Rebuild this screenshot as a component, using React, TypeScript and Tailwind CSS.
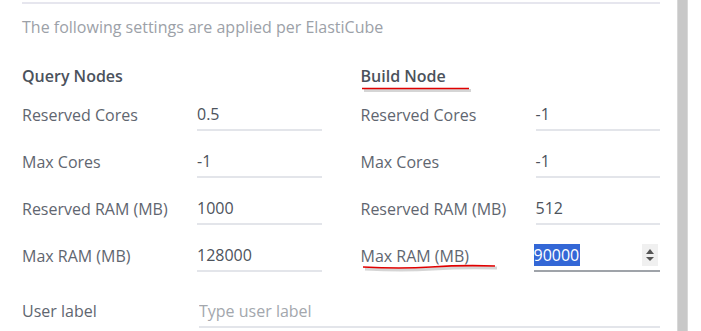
import React from 'react';

const font = { fontFamily: '"Open Sans", "Liberation Sans", sans-serif' };

type Field = { label: string; value: string };

const queryFields: Field[] = [
  { label: 'Reserved Cores', value: '0.5' },
  { label: 'Max Cores', value: '-1' },
  { label: 'Reserved RAM (MB)', value: '1000' },
  { label: 'Max RAM (MB)', value: '128000' },
];

const buildFields: Field[] = [
  { label: 'Reserved Cores', value: '-1' },
  { label: 'Max Cores', value: '-1' },
  { label: 'Reserved RAM (MB)', value: '512' },
];

const Row: React.FC<{ field: Field }> = ({ field }) => (
  <div className="flex items-center h-[47px]">
    <span className="w-[175px] shrink-0 text-[16px] text-[#5f6670]">{field.label}</span>
    <div className="flex-1 h-[32px] flex items-center border-b-2 border-[#e3e5ea] text-[16px] text-[#4d535c]">
      {field.value}
    </div>
  </div>
);

const FocusedRow: React.FC = () => (
  <div className="relative flex items-center h-[47px]">
    <span className="w-[173px] shrink-0 text-[16px] text-[#5f6670]">Max RAM (MB)</span>
    <div className="flex-1 h-[32px] flex items-center justify-between border-b-2 border-[#9fa3a9] mt-[1px] text-[16px]">
      <span className="bg-[#3367d6] text-white h-[22px] leading-[22px] pr-[1px]">90000</span>
      <div className="w-[16px] h-[22px] mr-[2px] bg-[#f0f0f0] flex flex-col items-center justify-center gap-[3px]">
        <div className="w-0 h-0 border-l-[4px] border-r-[4px] border-b-[5px] border-l-transparent border-r-transparent border-b-[#555]" />
        <div className="w-0 h-0 border-l-[4px] border-r-[4px] border-t-[4px] border-l-transparent border-r-transparent border-t-[#555]" />
      </div>
    </div>
    {/* hand-drawn annotation */}
    <svg className="absolute left-0 top-[31px]" width="140" height="10">
      <path d="M2 4 Q40 6 70 4 T134 3" stroke="#888" strokeOpacity="0.35" strokeWidth="3" fill="none" transform="translate(2,2)" />
      <path d="M2 4 Q40 6 70 4 T134 3" stroke="#e00000" strokeWidth="1.6" fill="none" />
    </svg>
  </div>
);

export default function App() {
  return (
    <div className="w-[701px] h-[331px] overflow-hidden bg-white flex" style={font}>
      <div className="w-[677px] shrink-0 pl-[22px] pr-[17px]">
        <div className="mt-[2px] h-[2px] bg-[#e6e6ee]" />
        <p className="mt-[12px] text-[16px] leading-[22px] text-[#9ca1a8]">
          The following settings are applied per ElastiCube
        </p>
        <div className="mt-[27px] grid grid-cols-2 gap-x-[39px]">
          <div>
            <h3 className="text-[16px] leading-[22px] font-semibold text-[#4b525c] mb-[4px]">Query Nodes</h3>
            {queryFields.map(f => (
              <Row key={f.label} field={f} />
            ))}
          </div>
          <div>
            <h3 className="relative text-[16px] leading-[22px] font-semibold text-[#4b525c] mb-[4px]">
              Build Node
              <svg className="absolute left-0 top-[21px]" width="116" height="8">
                <path d="M1 2.5 L108 2.5" stroke="#888" strokeOpacity="0.35" strokeWidth="3" fill="none" transform="translate(2,2)" />
                <path d="M1 2.5 L108 2.5" stroke="#e00000" strokeWidth="1.6" fill="none" />
              </svg>
            </h3>
            {buildFields.map(f => (
              <Row key={f.label} field={f} />
            ))}
            <FocusedRow />
          </div>
        </div>
        <div className="mt-[8px] flex items-center h-[47px]">
          <span className="w-[177px] shrink-0 text-[16px] text-[#5f6670]">User label</span>
          <input
            className="flex-1 h-[32px] mt-[2px] border-b-2 border-[#e3e5ea] text-[16px] text-[#4d535c] placeholder:text-[#a3a7ad] outline-none"
            placeholder="Type user label"
          />
        </div>
      </div>
      <div className="w-[11px] shrink-0 bg-[#c8c8c8] border-x border-[#d8d8d8]" />
      <div className="flex-1 bg-white" />
    </div>
  );
}
